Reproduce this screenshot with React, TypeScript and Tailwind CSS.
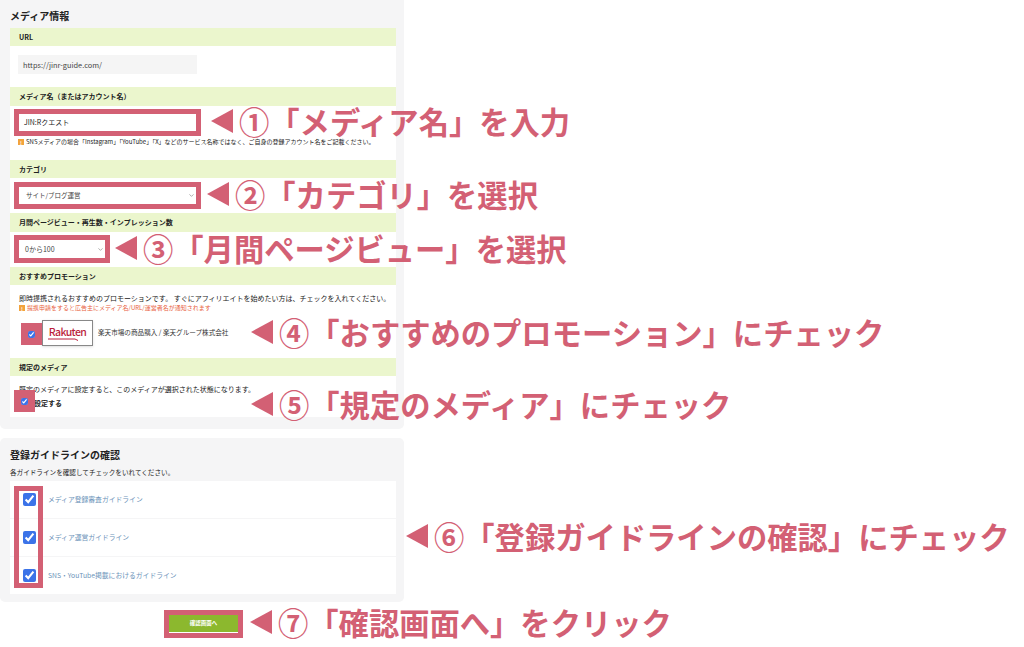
import type { ReactNode } from 'react';
import { ChevronDown } from 'lucide-react';

function SectionHeader({ title, tall }: { title: string; tall?: boolean }) {
    return (
        <div
            className={`flex items-center bg-[#ebf6cd] pl-[9px] text-[7px] font-bold text-[#222] ${
                tall ? 'h-[19px]' : 'h-[18px]'
            }`}
        >
            {title}
        </div>
    );
}

function Warn() {
    return (
        <span className="mr-[2px] inline-flex h-[6px] w-[6px] items-center justify-center bg-[#f2a33c] text-[5px] leading-none font-bold text-white">
            !
        </span>
    );
}

function Annotation({ className, children }: { className: string; children: ReactNode }) {
    return (
        <div className={`absolute flex items-center gap-[6px] ${className}`}>
            <svg width="22" height="24" viewBox="0 0 22 24">
                <path d="M0 12 L22 0 L22 24 Z" fill="#d36074" />
            </svg>
            <span className="text-[30.3px] leading-[30px] font-bold whitespace-nowrap text-[#d36074]">
                {children}
            </span>
        </div>
    );
}

function GuideRow({ title }: { title: string }) {
    return (
        <div className="flex h-[37px] items-center bg-white pl-[13px]">
            <input
                type="checkbox"
                checked
                readOnly
                className="m-0 h-[13px] w-[13px] accent-[#3b73e8]"
            />
            <a className="ml-[12px] text-[6.8px] text-[#6c93b9]">{title}</a>
        </div>
    );
}

function App() {
    return (
        <div
            className="relative h-[647px] w-[1024px] overflow-hidden bg-white text-[#222]"
            style={{ fontFamily: '"Noto Sans CJK JP", "Noto Sans", sans-serif' }}
        >
            <div className="flex w-[404px] flex-col">
                {/* media info */}
                <section className="h-[429px] rounded-b-[5px] bg-[#f5f5f6] px-[10px]">
                    <h2 className="flex h-[28px] items-center pt-[2px] text-[10px] font-bold">
                        メディア情報
                    </h2>
                    <div className="mr-[-2px] bg-white">
                        <SectionHeader title="URL" />
                        <div className="h-[41px] px-[8px] pt-[9px]">
                            <div className="flex h-[19px] w-[179px] items-center bg-[#f5f5f5] pl-[5px] text-[7.4px] text-[#444]">
                                https://jinr-guide.com/
                            </div>
                        </div>

                        <SectionHeader title="メディア名（またはアカウント名）" tall />
                        <div className="h-[54px] px-[8px] pt-[7px]">
                            <div className="flex h-[19px] w-[179px] items-center bg-white pl-[6px] text-[7px]">
                                JIN:Rクエスト
                            </div>
                            <p className="mt-[5px] flex items-center text-[6px] leading-[10px] whitespace-nowrap">
                                <Warn />
                                SNSメディアの場合「Instagram」「YouTube」「X」などのサービス名称ではなく、ご自身の登録アカウント名をご記載ください。
                            </p>
                        </div>

                        <SectionHeader title="カテゴリ" />
                        <div className="h-[35px] px-[8px] pt-[8px]">
                            <div className="flex h-[19px] w-[179px] items-center justify-between bg-white pr-[2px] pl-[8px] text-[6.5px] text-[#444]">
                                サイト/ブログ運営
                                <ChevronDown size={7} color="#777" />
                            </div>
                        </div>

                        <SectionHeader title="月間ページビュー・再生数・インプレッション数" tall />
                        <div className="h-[35px] px-[8px] pt-[8px]">
                            <div className="flex h-[19px] w-[88px] items-center justify-between bg-white pr-[2px] pl-[7px] text-[7px] text-[#444]">
                                0から100
                                <ChevronDown size={7} color="#777" />
                            </div>
                        </div>

                        <SectionHeader title="おすすめプロモーション" />
                        <div className="h-[73px] px-[9px]">
                            <p className="pt-[8px] text-[7px] leading-[10px] whitespace-nowrap">
                                即時提携されるおすすめのプロモーションです。 すぐにアフィリエイトを始めたい方は、チェックを入れてください。
                            </p>
                            <p className="flex items-center text-[6px] leading-[10px] text-[#e8603c]">
                                <Warn />
                                提携申請をすると広告主にメディア名/URL/運営者名が通知されます
                            </p>
                            <div className="mt-[7px] flex items-center">
                                <div className="w-[23px]" />
                                <div className="relative flex h-[26px] w-[51px] items-center justify-center border border-[#888] bg-white pb-[2px] text-[10.5px] font-medium tracking-[-0.6px] text-[#bb1e3c] shadow-sm">
                                    Rakuten
                                    <svg className="absolute top-[17px] left-[5px]" width="30" height="3" viewBox="0 0 30 3">
                                        <path d="M0 1 L27 1 L30 2.5" stroke="#bb1e3c" strokeWidth="1" fill="none" />
                                    </svg>
                                </div>
                                <span className="ml-[5px] text-[6.6px] text-[#333]">
                                    楽天市場の商品購入 / 楽天グループ株式会社
                                </span>
                            </div>
                        </div>

                        <SectionHeader title="規定のメディア" />
                        <div className="h-[41px] px-[9px]">
                            <p className="pt-[8px] text-[7px] leading-[10px] whitespace-nowrap">
                                既定のメディアに設定すると、このメディアが選択された状態になります。
                            </p>
                            <p className="mt-[4px] pl-[15px] text-[7px] leading-[10px] font-bold">設定する</p>
                        </div>
                    </div>
                </section>

                {/* guidelines */}
                <section className="mt-[9px] h-[164px] rounded-[5px] bg-[#f5f5f6] px-[10px]">
                    <h2 className="flex h-[29px] items-center pt-[3px] text-[10px] font-bold">
                        登録ガイドラインの確認
                    </h2>
                    <p className="text-[6.6px] leading-[11px] whitespace-nowrap">
                        各ガイドラインを確認してチェックをいれてください。
                    </p>
                    <div className="mt-[3px] mr-[-2px] flex flex-col gap-[1px] bg-[#f5f5f6]">
                        <GuideRow title="メディア登録審査ガイドライン" />
                        <GuideRow title="メディア運営ガイドライン" />
                        <GuideRow title="SNS・YouTube掲載におけるガイドライン" />
                    </div>
                </section>

                <div className="mt-[13px] flex justify-center pl-[3px]">
                    <button className="flex h-[17px] w-[69px] items-center justify-center bg-[#8cb82e] text-[5.5px] font-bold text-white">
                        確認画面へ
                    </button>
                </div>
            </div>

            {/* red annotation frames */}
            <div className="absolute top-[109px] left-[14px] h-[27px] w-[187px] border-[5px] border-[#d36074]" />
            <div className="absolute top-[182px] left-[14px] h-[27px] w-[187px] border-[5px] border-[#d36074]" />
            <div className="absolute top-[235px] left-[14px] h-[28px] w-[96px] border-[5px] border-[#d36074]" />
            <div className="absolute top-[323px] left-[21px] flex h-[22px] w-[21px] items-center justify-center bg-[#d36074]">
                <input type="checkbox" checked readOnly className="m-0 h-[7px] w-[7px] accent-[#3b73e8]" />
            </div>
            <div className="absolute top-[390px] left-[14px] flex h-[22px] w-[21px] items-center justify-center bg-[#d36074]">
                <input type="checkbox" checked readOnly className="m-0 h-[7px] w-[7px] accent-[#3b73e8]" />
            </div>
            <div className="absolute top-[486px] left-[14px] h-[102px] w-[29px] border-[5px] border-[#d36074]" />
            <div className="absolute top-[610px] left-[164px] h-[28px] w-[79px] border-[5px] border-[#d36074]" />

            {/* arrows and labels */}
            <Annotation className="top-[106px] left-[211px]">①「メディア名」を入力</Annotation>
            <Annotation className="top-[179px] left-[207px]">②「カテゴリ」を選択</Annotation>
            <Annotation className="top-[233px] left-[115px]">③「月間ページビュー」を選択</Annotation>
            <Annotation className="top-[317px] left-[251px]">④「おすすめのプロモーション」にチェック</Annotation>
            <Annotation className="top-[389px] left-[251px]">⑤「規定のメディア」にチェック</Annotation>
            <Annotation className="top-[521px] left-[406px]">⑥「登録ガイドラインの確認」にチェック</Annotation>
            <Annotation className="top-[607px] left-[250px]">⑦「確認画面へ」をクリック</Annotation>
        </div>
    );
}

export default App;
